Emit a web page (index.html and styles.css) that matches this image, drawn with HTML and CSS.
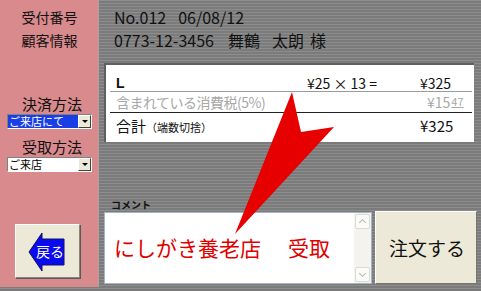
FILE: index.html
```html
<!DOCTYPE html>
<html lang="ja">
<head>
<meta charset="utf-8">
<title>注文</title>
<link rel="stylesheet" href="styles.css">
</head>
<body>
<div class="screen">
  <aside class="side">
    <div class="side-head">受付番号</div>
    <div class="side-head">顧客情報</div>
    <div class="field-label first">決済方法</div>
    <div class="combo">
      <span class="combo-text selected">ご来店にて</span>
      <span class="combo-btn"><span class="tri"></span></span>
    </div>
    <div class="field-label">受取方法</div>
    <div class="combo">
      <span class="combo-text">ご来店</span>
      <span class="combo-btn"><span class="tri"></span></span>
    </div>
    <button class="back" type="button">
      <svg width="65" height="54" viewBox="0 0 65 54">
        <polygon points="14,28 27,9 27,15 49,15 49,41 27,41 27,47" fill="#0a0aee" stroke="#101060" stroke-width="1"/>
        <text x="35" y="33" class="back-text" text-anchor="middle">戻る</text>
      </svg>
    </button>
  </aside>
  <main class="main">
    <div class="info">No.012<span class="sp2"></span>06/08/12</div>
    <div class="info">0773-12-3456<span class="sp3"></span>舞鶴<span class="sp2"></span>太朗<span class="sp1"></span>様</div>
    <div class="receipt">
      <div class="row row-item">
        <span class="item-name">L</span>
        <span class="calc">¥25 × 13 =</span>
        <span class="amount">¥325</span>
      </div>
      <div class="row row-tax">
        <span class="tax-name">含まれている消費税(5%)</span>
        <span class="tax-amount">¥15<span class="frac">47</span></span>
      </div>
      <div class="row row-total">
        <span class="total-name">合計<span class="small">（端数切捨）</span></span>
        <span class="amount">¥325</span>
      </div>
    </div>
    <div class="comment-label">コメント</div>
    <div class="bottom">
      <div class="comment">
        <div class="comment-text">にしがき養老店<span class="gap"></span>受取</div>
        <div class="scroll">
          <span class="sarrow up"></span>
          <span class="sarrow down"></span>
        </div>
      </div>
      <button class="order" type="button">注文する</button>
    </div>
  </main>
  <svg class="pointer" width="481" height="291" viewBox="0 0 481 291">
    <polygon points="292,92 301,132 334,127 235,234" fill="#e60000"/>
  </svg>
</div>
</body>
</html>
```
FILE: styles.css
```css
* { box-sizing: border-box; }
html, body { margin: 0; padding: 0; }
body {
  width: 481px;
  height: 291px;
  overflow: hidden;
  font-family: "Noto Sans CJK JP", "Liberation Sans", sans-serif;
  color: #111;
}
.screen {
  position: relative;
  width: 481px;
  height: 291px;
  display: flex;
  background: repeating-linear-gradient(to bottom, #8d8d8d 0 1px, #7b7b7b 1px 3px);
}
.side {
  width: 99px;
  height: 287px;
  background: #d98a8d;
  border-right: 1px solid #b0a0a0;
  display: flex;
  flex-direction: column;
  padding-top: 6px;
}
.side-head {
  font-size: 14px;
  line-height: 23px;
  text-align: center;
  padding-left: 1px;
}
.field-label {
  font-size: 15px;
  line-height: 20px;
  padding-left: 22px;
  margin-top: 8px;
}
.field-label.first { margin-top: 42px; }
.combo {
  margin-left: 7px;
  width: 85px;
  height: 15px;
  background: #fff;
  border-top: 1px solid #808080;
  border-left: 1px solid #808080;
  border-bottom: 1px solid #fff;
  border-right: 1px solid #fff;
  display: flex;
  align-items: stretch;
}
.combo-text {
  flex: 1;
  font-size: 11px;
  line-height: 13px;
  padding-left: 1px;
  color: #000;
  white-space: nowrap;
}
.combo-text.selected { background: #1a3ee6; color: #fff; }
.combo-btn {
  width: 13px;
  background: #ece9d8;
  border: 1px solid #fff;
  border-right-color: #404040;
  border-bottom-color: #404040;
  display: flex;
  align-items: center;
  justify-content: center;
}
.tri {
  width: 0; height: 0;
  border-left: 3px solid transparent;
  border-right: 3px solid transparent;
  border-top: 3px solid #000;
}
.back {
  margin-top: 52px;
  margin-left: 15px;
  width: 65px;
  height: 54px;
  padding: 0;
  background: #ece9d8;
  border: 1px solid #fff;
  border-right-color: #8a877a;
  border-bottom-color: #8a877a;
  box-shadow: 1px 1px 0 #5a5a5a;
}
.back svg { display: block; margin: -1px 0 0 -1px; }
.back-text {
  font-family: "Noto Sans CJK JP", sans-serif;
  font-size: 14px;
  fill: #fff;
}
.main {
  flex: 1;
  display: flex;
  flex-direction: column;
  padding-top: 6px;
  padding-left: 5px;
}
.info {
  font-size: 16px;
  line-height: 23px;
  padding-left: 10px;
  white-space: nowrap;
  color: #111;
}
.sp1 { display: inline-block; width: 6px; }
.sp2 { display: inline-block; width: 12px; }
.sp3 { display: inline-block; width: 14px; }
.receipt {
  margin-top: 11px;
  width: 370px;
  height: 79px;
  background: #fff;
  border-top: 2px solid #5f5f5f;
  border-left: 2px solid #5f5f5f;
  padding: 8px 0 0 4px;
}
.row {
  display: flex;
  align-items: center;
  margin-right: 2px;
  padding-left: 6px;
  font-size: 14px;
}
.row-item { height: 19px; border-bottom: 1px solid #9a9a9a; padding-top: 2px; }
.row-tax { height: 21px; border-bottom: 1px solid #222; color: #a8a8a8; }
.row-total { height: 24px; font-size: 15px; }
.item-name { font-weight: bold; flex: 1; font-family: "Liberation Sans", sans-serif; }
.calc { width: 113px; }
.amount { width: 52px; }
.tax-name { flex: 1; letter-spacing: -0.5px; }
.tax-amount { width: 45px; }
.frac { font-size: 11px; text-decoration: underline; vertical-align: 2px; margin-left: 1px; }
.total-name { flex: 1; }
.small { font-size: 11px; }
.comment-label {
  margin-top: 56px;
  margin-left: 7px;
  font-size: 10px;
  line-height: 13px;
  font-weight: bold;
}
.bottom {
  display: flex;
  gap: 3px;
  margin-top: 0;
}
.comment {
  width: 268px;
  height: 72px;
  margin-top: 1px;
  background: #fff;
  border: 1px solid #a5b4c8;
  display: flex;
}
.comment-text {
  flex: 1;
  color: #e00000;
  font-size: 21px;
  line-height: 24px;
  padding: 22px 0 0 9px;
  white-space: nowrap;
}
.gap { display: inline-block; width: 27px; }
.scroll {
  width: 17px;
  background: #f4f3ee;
  display: flex;
  flex-direction: column;
  justify-content: space-between;
  padding: 1px;
}
.sarrow {
  height: 15px;
  background: #fbfbf8;
  border: 1px solid #dcdcd4;
  border-radius: 2px;
  position: relative;
}
.sarrow::after {
  content: "";
  position: absolute;
  left: 4px;
  top: 5px;
  width: 4px;
  height: 4px;
  border-left: 1px solid #b8b8b8;
  border-top: 1px solid #b8b8b8;
  transform: rotate(45deg);
}
.sarrow.down::after { transform: rotate(225deg); top: 3px; }
.order {
  width: 102px;
  height: 73px;
  background: #ece9d8;
  border: 1px solid #fff;
  border-right-color: #7a7868;
  border-bottom-color: #7a7868;
  font-family: "Noto Sans CJK JP", sans-serif;
  font-size: 19px;
  color: #111;
  padding: 0 0 0 2px;
}
.pointer {
  position: absolute;
  left: 0;
  top: 0;
  pointer-events: none;
}
```
